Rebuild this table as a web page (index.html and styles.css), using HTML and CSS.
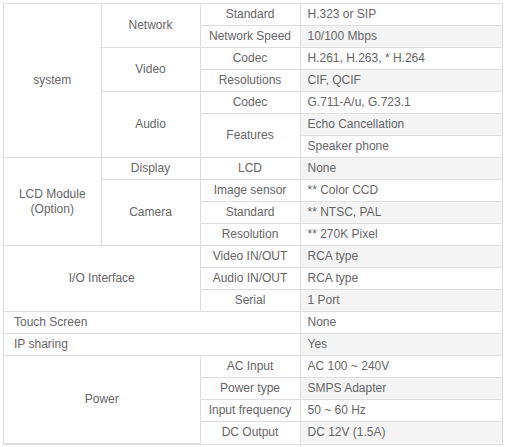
FILE: index.html
```html
<!DOCTYPE html>
<html>
<head>
<meta charset="utf-8">
<link rel="stylesheet" href="styles.css">
</head>
<body>
<div class="wrap">
<table class="spec">
<colgroup><col class="c1"><col class="c2"><col class="c3"><col class="c4"></colgroup>
<tr><td rowspan="7">system</td><td rowspan="2">Network</td><td>Standard</td><td class="v">H.323 or SIP</td></tr>
<tr><td>Network Speed</td><td class="v g">10/100 Mbps</td></tr>
<tr><td rowspan="2">Video</td><td>Codec</td><td class="v">H.261, H.263, * H.264</td></tr>
<tr><td>Resolutions</td><td class="v g">CIF, QCIF</td></tr>
<tr><td rowspan="3">Audio</td><td>Codec</td><td class="v">G.711-A/u, G.723.1</td></tr>
<tr><td rowspan="2">Features</td><td class="v g">Echo Cancellation</td></tr>
<tr><td class="v">Speaker phone</td></tr>
<tr><td rowspan="4">LCD Module<br>(Option)</td><td>Display</td><td>LCD</td><td class="v g">None</td></tr>
<tr><td rowspan="3">Camera</td><td>Image sensor</td><td class="v">** Color CCD</td></tr>
<tr><td>Standard</td><td class="v g">** NTSC, PAL</td></tr>
<tr><td>Resolution</td><td class="v">** 270K Pixel</td></tr>
<tr><td rowspan="3" colspan="2">I/O Interface</td><td>Video IN/OUT</td><td class="v g">RCA type</td></tr>
<tr><td>Audio IN/OUT</td><td class="v">RCA type</td></tr>
<tr><td>Serial</td><td class="v g">1 Port</td></tr>
<tr><td colspan="3" class="l">Touch Screen</td><td class="v">None</td></tr>
<tr><td colspan="3" class="l">IP sharing</td><td class="v g">Yes</td></tr>
<tr><td rowspan="4" colspan="2">Power</td><td>AC Input</td><td class="v">AC 100 ~ 240V</td></tr>
<tr><td>Power type</td><td class="v g">SMPS Adapter</td></tr>
<tr><td>Input frequency</td><td class="v">50 ~ 60 Hz</td></tr>
<tr><td>DC Output</td><td class="v g">DC 12V (1.5A)</td></tr>
</table>
</div>
</body>
</html>
```
FILE: styles.css
```css
html, body { margin: 0; padding: 0; background: #fff; }
body { padding: 3px; }
.wrap {
  width: 498px;
  border: 1px solid #dedede;
}
.spec {
  width: 498px;
  table-layout: fixed;
  border-collapse: collapse;
  font-family: "Liberation Sans", Arial, sans-serif;
  font-size: 12px;
  color: #666666;
}
.c1 { width: 97px; }
.c2 { width: 99px; }
.c3 { width: 100px; }
.c4 { width: 202px; }
.spec td {
  border: 1px solid #dedede;
  height: 21px;
  padding: 0;
  text-align: center;
  vertical-align: middle;
  line-height: 15px;
  white-space: nowrap;
}
.spec tr:first-child td { border-top: none; }
.spec td:first-child { border-left: none; }
.spec tr:last-child td { border-bottom: none; }
.spec td.v { text-align: left; padding-left: 7px; border-right: none; }
.spec td.g { background: #f4f4f4; }
.spec td.l { text-align: left; padding-left: 10px; }
```
